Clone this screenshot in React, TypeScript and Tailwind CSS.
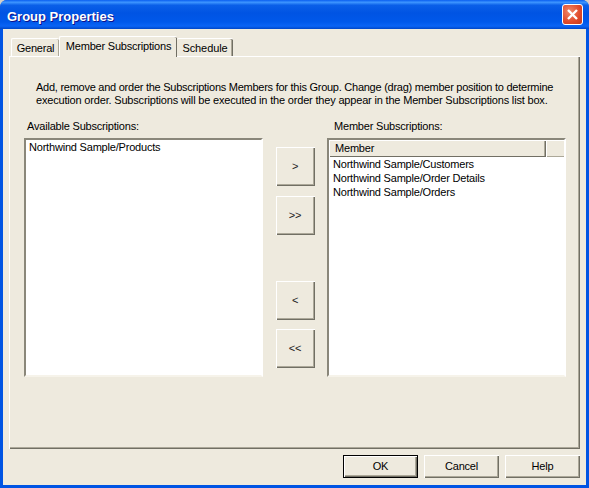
const Btn = ({ label, className = "" }: { label: string; className?: string }) => (
  <button className={`flex h-[39px] w-[39px] items-center justify-center bg-[#eeeade] pr-px text-[11px] text-[#222] shadow-[inset_1px_1px_0_#fff,inset_-1px_-1px_0_#716f64,inset_-2px_-2px_0_#aca899] ${className}`}>
    {label}
  </button>
);

const FooterBtn = ({ label, primary }: { label: string; primary?: boolean }) => (
  <button
    className={`flex h-[23px] w-[75px] items-center justify-center bg-[#eeeade] text-[11px] text-black ${
      primary
        ? "border border-black shadow-[inset_1px_1px_0_#fff,inset_-1px_-1px_0_#716f64,inset_-2px_-2px_0_#aca899]"
        : "shadow-[inset_1px_1px_0_#fff,inset_-1px_-1px_0_#716f64,inset_-2px_-2px_0_#aca899]"
    }`}
  >
    {label}
  </button>
);

const sunken =
  "h-[239px] w-[239px] bg-white border-2 border-t-[#8a877a] border-l-[#8a877a] border-r-white border-b-[#f6f3ea]";

export default function App() {
  return (
    <div className="h-[488px] w-[589px] overflow-hidden bg-[#d4d0c8] font-['Liberation_Sans',sans-serif] text-[11px] leading-[13px] tracking-[-0.2px] text-black">
      <div className="flex h-full flex-col overflow-hidden rounded-t-[7px] bg-[#0054e3]">
        {/* title bar */}
        <div className="flex h-[29px] items-center justify-between bg-[linear-gradient(180deg,#0a5ff0_0%,#3d95ff_8%,#0a5fe8_18%,#0054e3_45%,#0058ea_75%,#0a64f5_90%,#0046c8_100%)] pl-[7px] pr-[6px]">
          <span className="pt-[3px] text-[13px] font-bold tracking-normal text-white [text-shadow:1px_1px_0_#0f1089]">Group Properties</span>
          <div className="flex h-[21px] w-[21px] items-center justify-center rounded-[3px] border border-white bg-[radial-gradient(circle_at_35%_35%,#f0896a,#e0492a_60%,#c23a1c)]">
            <svg width="13" height="13" viewBox="0 0 13 13">
              <path d="M2 2 L11 11 M11 2 L2 11" stroke="#fff" strokeWidth="2.4" />
            </svg>
          </div>
        </div>

        {/* client area */}
        <div className="mx-[3px] mb-[3px] flex flex-1 flex-col bg-[#eeeade] px-[6px] pt-[7px]">
          <div className="relative z-10 flex h-[20px] items-end pl-[2px]">
            <div className="flex h-[18px] w-[48px] items-center justify-center rounded-t-[2px] border-l border-t border-white pt-px shadow-[inset_-1px_0_0_#aca899]">General</div>
            <div className="mb-[-1px] flex h-[21px] w-[118px] items-center justify-center rounded-t-[2px] border-l border-t border-white pb-[2px] shadow-[inset_-1px_0_0_#716f64] bg-[#eeeade]">Member Subscriptions</div>
            <div className="flex h-[18px] w-[56px] items-center justify-center rounded-t-[2px] border-t border-white pt-px tracking-[-0.1px] shadow-[inset_-1px_0_0_#716f64,inset_-2px_0_0_#aca899]">Schedule</div>
          </div>

          <div className="flex h-[393px] flex-col border-l border-t border-white pl-[14px] pr-[14px] pt-[24px] shadow-[inset_-1px_-1px_0_#716f64,inset_-2px_-2px_0_#aca899]">
            <p className="whitespace-nowrap pl-[12px]">
              <span className="tracking-[-0.255px]">Add, remove and order the Subscriptions Members for this Group. Change (drag) member position to determine</span>
              <br />
              <span className="tracking-[-0.18px]">execution order. Subscriptions will be executed in the order they appear in the Member Subscriptions list box.</span>
            </p>

            <div className="mt-[13px] flex items-start">
              <div className="flex w-[239px] flex-col">
                <span className="mb-[5px] pl-[3px]">Available Subscriptions:</span>
                <div className={`${sunken} px-[3px] pt-px`}>
                  <div>Northwind Sample/Products</div>
                </div>
              </div>

              <div className="ml-[13px] mr-[12px] mt-[27px] flex w-[39px] flex-col">
                <Btn label=">" />
                <Btn label=">>" className="mt-[10px]" />
                <Btn label="<" className="mt-[46px]" />
                <Btn label="<<" className="mt-[9px]" />
              </div>

              <div className="flex w-[239px] flex-col">
                <span className="mb-[5px] pl-[7px]">Member Subscriptions:</span>
                <div className={sunken}>
                  <div className="flex h-[17px] bg-[#eeeade]">
                    <div className="flex w-[217px] items-center pl-[6px] shadow-[inset_1px_1px_0_#fff,inset_-1px_-1px_0_#716f64,inset_-2px_0_0_#aca899]">Member</div>
                    <div className="flex-1 shadow-[inset_1px_1px_0_#fff,inset_0_-1px_0_#aca899]" />
                  </div>
                  <div className="flex flex-col gap-px px-[4px] pt-px">
                    <div>Northwind Sample/Customers</div>
                    <div>Northwind Sample/Order Details</div>
                    <div>Northwind Sample/Orders</div>
                  </div>
                </div>
              </div>
            </div>
          </div>

          <div className="flex justify-end gap-[6px] pr-0 pt-[6px]">
            <FooterBtn label="OK" primary />
            <FooterBtn label="Cancel" />
            <FooterBtn label="Help" />
          </div>
        </div>
      </div>
    </div>
  );
}
